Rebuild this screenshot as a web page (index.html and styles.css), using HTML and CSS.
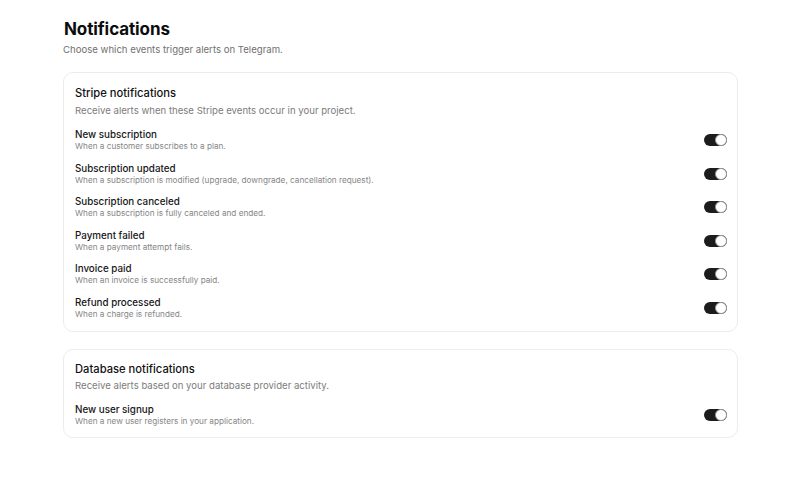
FILE: index.html
```html
<!DOCTYPE html>
<html lang="en">
<head>
<meta charset="utf-8">
<title>Notifications</title>
<link rel="stylesheet" href="styles.css">
</head>
<body>
<main class="page">
  <header class="head">
    <h1 class="title">Notifications</h1>
    <p class="subtitle">Choose which events trigger alerts on Telegram.</p>
  </header>

  <section class="card">
    <h2 class="card-title">Stripe notifications</h2>
    <p class="card-desc">Receive alerts when these Stripe events occur in your project.</p>
    <div class="rows">
      <div class="row">
        <div class="row-text"><div class="row-title">New subscription</div><div class="row-desc">When a customer subscribes to a plan.</div></div>
        <span class="toggle"><span class="knob"></span></span>
      </div>
      <div class="row">
        <div class="row-text"><div class="row-title">Subscription updated</div><div class="row-desc">When a subscription is modified (upgrade, downgrade, cancellation request).</div></div>
        <span class="toggle"><span class="knob"></span></span>
      </div>
      <div class="row">
        <div class="row-text"><div class="row-title">Subscription canceled</div><div class="row-desc">When a subscription is fully canceled and ended.</div></div>
        <span class="toggle"><span class="knob"></span></span>
      </div>
      <div class="row">
        <div class="row-text"><div class="row-title">Payment failed</div><div class="row-desc">When a payment attempt fails.</div></div>
        <span class="toggle"><span class="knob"></span></span>
      </div>
      <div class="row">
        <div class="row-text"><div class="row-title">Invoice paid</div><div class="row-desc">When an invoice is successfully paid.</div></div>
        <span class="toggle"><span class="knob"></span></span>
      </div>
      <div class="row">
        <div class="row-text"><div class="row-title">Refund processed</div><div class="row-desc">When a charge is refunded.</div></div>
        <span class="toggle"><span class="knob"></span></span>
      </div>
    </div>
  </section>

  <section class="card card-compact">
    <h2 class="card-title">Database notifications</h2>
    <p class="card-desc">Receive alerts based on your database provider activity.</p>
    <div class="rows">
      <div class="row">
        <div class="row-text"><div class="row-title">New user signup</div><div class="row-desc">When a new user registers in your application.</div></div>
        <span class="toggle"><span class="knob"></span></span>
      </div>
    </div>
  </section>
</main>
</body>
</html>
```

FILE: styles.css
```css
* { box-sizing: border-box; }
html, body { margin: 0; padding: 0; background: #ffffff; }
body {
  font-family: Inter, "Liberation Sans", Arial, sans-serif;
  color: #111111;
}
.page {
  padding: 19px 62px 0 64px;
  display: flex;
  flex-direction: column;
  gap: 17px;
}
.title {
  margin: 0;
  font-size: 17px;
  line-height: 21px;
  font-weight: 700;
  letter-spacing: -0.1px;
  color: #0c0c0c;
}
.subtitle {
  margin: 5px 0 0 -1px;
  font-size: 9.6px;
  line-height: 10px;
  color: #707070;
}
.card {
  margin-left: -1px;
  border: 1px solid #ececec;
  border-radius: 10px;
  padding: 12px 10px 11px 11px;
}
.card-title {
  margin: 0;
  font-size: 11.2px;
  line-height: 16px;
  font-weight: 500;
  color: #111;
}
.card-desc {
  margin: 3px 0 0 0;
  font-size: 9.6px;
  line-height: 14px;
  color: #7c7c7c;
}
.card-compact { padding-top: 11px; padding-bottom: 10px; }
.card-compact .card-desc { margin-top: 2px; }
.rows {
  margin-top: 10px;
  display: flex;
  flex-direction: column;
  gap: 9.6px;
}
.row {
  display: flex;
  align-items: center;
  justify-content: space-between;
}
.row-title {
  font-size: 9.8px;
  line-height: 13px;
  font-weight: 500;
  color: #161616;
}
.row-desc {
  font-size: 8.2px;
  line-height: 11px;
  color: #868686;
}
.toggle {
  position: relative;
  width: 23px;
  height: 12px;
  border-radius: 6px;
  background: #1c1c1c;
  flex: none;
}
.knob {
  position: absolute;
  right: 0;
  top: 0;
  width: 12px;
  height: 12px;
  border-radius: 50%;
  background: #fff;
  border: 1px solid #9a9a9a;
}
```
